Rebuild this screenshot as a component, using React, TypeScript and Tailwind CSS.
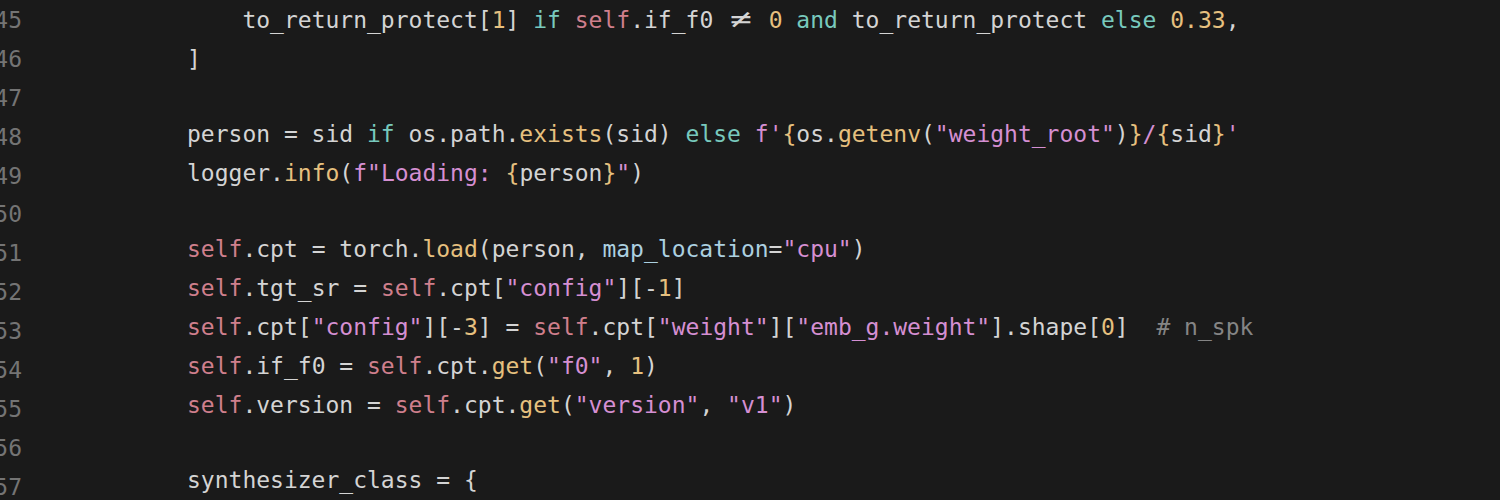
import React from "react";

type Tok = [string, string];

const C = {
  txt: "text-[#d4d4d4]",
  kw: "text-[#78c9bd]",
  self: "text-[#cf7f8c]",
  fn: "text-[#e6c07f]",
  num: "text-[#e6c07f]",
  str: "text-[#d58fd2]",
  arg: "text-[#acd0e0]",
  cmt: "text-[#858585]",
};

const lines: { n: number; indent: number; toks: Tok[] }[] = [
  {
    n: 45,
    indent: 4,
    toks: [
      ["to_return_protect[", C.txt],
      ["1", C.num],
      ["] ", C.txt],
      ["if", C.kw],
      [" ", C.txt],
      ["self", C.self],
      [".if_f0 ", C.txt],
      ["≠", "neq"],
      [" ", C.txt],
      ["0", C.num],
      [" ", C.txt],
      ["and", C.kw],
      [" to_return_protect ", C.txt],
      ["else", C.kw],
      [" ", C.txt],
      ["0.33", C.num],
      [",", C.txt],
    ],
  },
  { n: 46, indent: 0, toks: [["]", C.txt]] },
  { n: 47, indent: 0, toks: [] },
  {
    n: 48,
    indent: 0,
    toks: [
      ["person = sid ", C.txt],
      ["if", C.kw],
      [" os.path.", C.txt],
      ["exists", C.fn],
      ["(sid) ", C.txt],
      ["else", C.kw],
      [" ", C.txt],
      ["f'", C.str],
      ["{", C.fn],
      ["os.", C.txt],
      ["getenv", C.fn],
      ["(", C.txt],
      ['"weight_root"', C.str],
      [")", C.txt],
      ["}", C.fn],
      ["/", C.str],
      ["{", C.fn],
      ["sid", C.txt],
      ["}", C.fn],
      ["'", C.str],
    ],
  },
  {
    n: 49,
    indent: 0,
    toks: [
      ["logger.", C.txt],
      ["info", C.fn],
      ["(", C.txt],
      ['f"Loading: ', C.str],
      ["{", C.fn],
      ["person", C.txt],
      ["}", C.fn],
      ['"', C.str],
      [")", C.txt],
    ],
  },
  { n: 50, indent: 0, toks: [] },
  {
    n: 51,
    indent: 0,
    toks: [
      ["self", C.self],
      [".cpt = torch.", C.txt],
      ["load", C.fn],
      ["(person, ", C.txt],
      ["map_location", C.arg],
      ["=", C.txt],
      ['"cpu"', C.str],
      [")", C.txt],
    ],
  },
  {
    n: 52,
    indent: 0,
    toks: [
      ["self", C.self],
      [".tgt_sr = ", C.txt],
      ["self", C.self],
      [".cpt[", C.txt],
      ['"config"', C.str],
      ["][-", C.txt],
      ["1", C.num],
      ["]", C.txt],
    ],
  },
  {
    n: 53,
    indent: 0,
    toks: [
      ["self", C.self],
      [".cpt[", C.txt],
      ['"config"', C.str],
      ["][-", C.txt],
      ["3", C.num],
      ["] = ", C.txt],
      ["self", C.self],
      [".cpt[", C.txt],
      ['"weight"', C.str],
      ["][", C.txt],
      ['"emb_g.weight"', C.str],
      ["].shape[", C.txt],
      ["0", C.num],
      ["]  ", C.txt],
      ["# n_spk", C.cmt],
    ],
  },
  {
    n: 54,
    indent: 0,
    toks: [
      ["self", C.self],
      [".if_f0 = ", C.txt],
      ["self", C.self],
      [".cpt.", C.txt],
      ["get", C.fn],
      ["(", C.txt],
      ['"f0"', C.str],
      [", ", C.txt],
      ["1", C.num],
      [")", C.txt],
    ],
  },
  {
    n: 55,
    indent: 0,
    toks: [
      ["self", C.self],
      [".version = ", C.txt],
      ["self", C.self],
      [".cpt.", C.txt],
      ["get", C.fn],
      ["(", C.txt],
      ['"version"', C.str],
      [", ", C.txt],
      ['"v1"', C.str],
      [")", C.txt],
    ],
  },
  { n: 56, indent: 0, toks: [] },
  { n: 57, indent: 0, toks: [["synthesizer_class = {", C.txt]] },
];

export default function App() {
  return (
    <div
      className="w-[1500px] h-[500px] overflow-hidden bg-[#1a1a1a] flex pt-[1px] text-[23px] leading-[38.9px]"
      style={{ fontFamily: '"DejaVu Sans Mono", "Liberation Mono", monospace' }}
    >
      {/* gutter */}
      <div className="-ml-[6px] w-[28px] shrink-0 flex flex-col text-right text-[#747474]">
        {lines.map((l) => (
          <div key={l.n} className="h-[38.9px]">
            {l.n}
          </div>
        ))}
      </div>

      {/* code */}
      <div className="pl-[165px] flex flex-col whitespace-pre">
        {lines.map((l) => (
          <div key={l.n} className="h-[38.9px]">
            {" ".repeat(l.indent)}
            {l.toks.map(([t, cls], i) =>
              cls === "neq" ? (
                <span
                  key={i}
                  className="inline-block w-[27.7px] text-center text-[26px] leading-[20px] text-[#d4d4d4] scale-x-[1.4]"
                >
                  {t}
                </span>
              ) : (
                <span key={i} className={cls}>
                  {t}
                </span>
              )
            )}
          </div>
        ))}
      </div>
    </div>
  );
}
